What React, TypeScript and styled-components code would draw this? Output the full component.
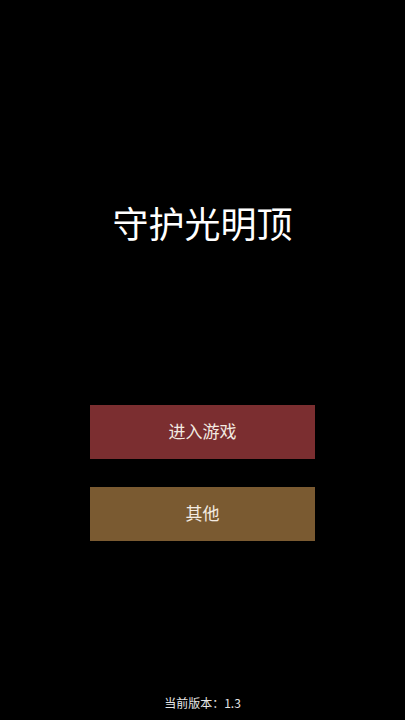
import styled, { createGlobalStyle } from "styled-components";

const GlobalStyle = createGlobalStyle`
  html, body {
    margin: 0;
    padding: 0;
    background: #000;
  }
  body {
    font-family: "Noto Sans CJK SC", "Noto Sans", sans-serif;
  }
`

const Screen = styled.div`
  width: 405px;
  height: 720px;
  background: #000;
  display: flex;
  flex-direction: column;
  align-items: center;
  overflow: hidden;
`

const Title = styled.h1`
  margin: 202px 0 0;
  color: #fff;
  font-size: 36px;
  font-weight: 400;
  line-height: 40px;
  letter-spacing: 0;
`

const Menu = styled.div`
  margin-top: 163px;
  display: flex;
  flex-direction: column;
  gap: 28px;
`

const MenuButton = styled.button<{ $bg: string }>`
  width: 225px;
  height: 54px;
  border: none;
  padding: 0 0 3px;
  background: ${props => props.$bg};
  color: #f3ebe2;
  font-family: inherit;
  font-size: 17px;
  cursor: pointer;
`

const Version = styled.div`
  margin-top: auto;
  margin-bottom: 9px;
  color: #e6e6e6;
  font-size: 12px;
  line-height: 16px;
`

export default function App() {
  return (
    <>
      <GlobalStyle />
      <Screen>
        <Title>守护光明顶</Title>
        <Menu>
          <MenuButton $bg="#7b2e30">进入游戏</MenuButton>
          <MenuButton $bg="#7a5a31">其他</MenuButton>
        </Menu>
        <Version>当前版本：1.3</Version>
      </Screen>
    </>
  )
}
